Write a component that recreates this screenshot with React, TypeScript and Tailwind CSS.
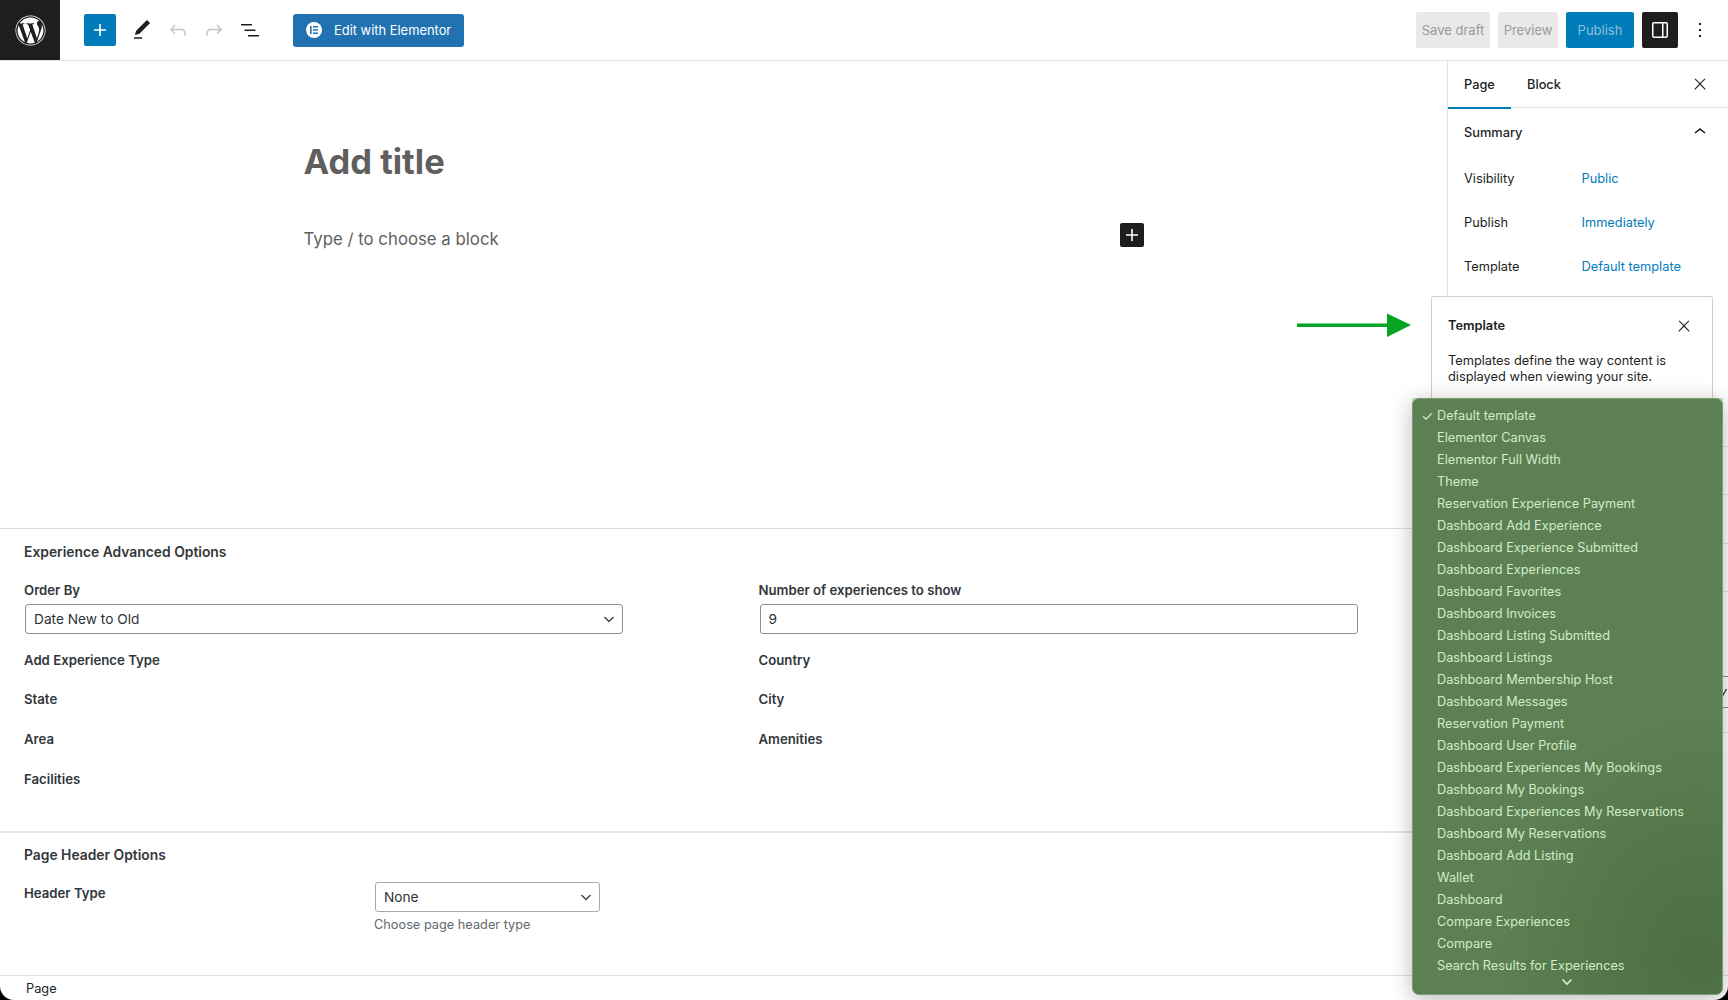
import { FaWordpress } from "react-icons/fa";

const font = { fontFamily: "Inter, 'Liberation Sans', sans-serif" };

function Ic({ d, size = 24, className = "" }: { d: string; size?: number; className?: string }) {
  return (
    <svg width={size} height={size} viewBox="0 0 24 24" fill="currentColor" className={className}>
      <path d={d} />
    </svg>
  );
}

const P = {
  plus: "M18 11.2h-5.2V6h-1.6v5.2H6v1.6h5.2V18h1.6v-5.2H18z",
  undo: "M18.3 11.7c-.6-.6-1.4-.9-2.3-.9H6.7l2.9-3.3-1.1-1-4.5 5L8.5 16l1-1-2.7-2.7H16c.5 0 .9.2 1.3.5 1 1 1 3.4 1 4.5v.3h1.5v-.2c0-1.5 0-4.3-1.5-5.7z",
  redo: "M15.6 6.5l-1.1 1 2.9 3.3H8c-.9 0-1.7.3-2.3.9-1.4 1.5-1.4 4.2-1.4 5.6v.2h1.5v-.3c0-1.1 0-3.5 1-4.5.3-.3.7-.5 1.3-.5h9.2L14.5 15l1.1 1.1 4.6-4.6-4.6-5z",
  list: "M3 6h11v1.5H3V6Zm3.5 5.5h11V13h-11v-1.5ZM21 17H10v1.5h11V17Z",
  pen: "M20.1 5.1L16.9 2 6.2 12.7l-1.3 4.4 4.5-1.3L20.1 5.1zM4 20.8h8v-1.5H4v1.5z",
  close: "M13 11.8l6.1-6.3-1-1-6.1 6.2-6.1-6.2-1 1 6.1 6.3-6.5 6.7 1 1 6.5-6.6 6.5 6.6 1-1z",
  more: "M13 19h-2v-2h2v2zm0-6h-2v-2h2v2zm0-6h-2V5h2v2z",
  drawer: "M18 4H6c-1.1 0-2 .9-2 2v12c0 1.1.9 2 2 2h12c1.1 0 2-.9 2-2V6c0-1.1-.9-2-2-2zm-4 14.5H6c-.3 0-.5-.2-.5-.5V6c0-.3.2-.5.5-.5h8v13zm4.5-.5c0 .3-.2.5-.5.5h-2.5v-13H18c.3 0 .5.2.5.5v12z",
  up: "M6.5 12.4L12 8l5.5 4.4-.9 1.2L12 10l-4.5 3.6-1-1.2z",
};

const items = [
  "Default template", "Elementor Canvas", "Elementor Full Width", "Theme", "Reservation Experience Payment",
  "Dashboard Add Experience", "Dashboard Experience Submitted", "Dashboard Experiences", "Dashboard Favorites",
  "Dashboard Invoices", "Dashboard Listing Submitted", "Dashboard Listings", "Dashboard Membership Host",
  "Dashboard Messages", "Reservation Payment", "Dashboard User Profile", "Dashboard Experiences My Bookings",
  "Dashboard My Bookings", "Dashboard Experiences My Reservations", "Dashboard My Reservations", "Dashboard Add Listing",
  "Wallet", "Dashboard", "Compare Experiences", "Compare", "Search Results for Experiences",
];

function SelectBox({ value, className }: { value: string; className: string }) {
  return (
    <div className={`flex h-[30px] items-center justify-between rounded-[3px] border border-[#8c8f94] pl-2 pr-[5px] text-[13.7px] text-[#2c3338] ${className}`}>
      <span>{value}</span>
      <svg width="16" height="16" viewBox="0 0 16 16" fill="none" stroke="#3c434a" strokeWidth="1.4"><path d="M3.5 6l4.5 4.5L12.5 6" /></svg>
    </div>
  );
}

function Label({ children, className = "" }: { children: string; className?: string }) {
  return <div className={`text-[13.2px] leading-4 font-semibold text-[#32373c] ${className}`}>{children}</div>;
}

export default function App() {
  return (
    <div className="h-[1000px] w-[1728px] overflow-hidden bg-black" style={font}>
      <div className="relative flex h-[1000px] flex-col overflow-hidden rounded-b-[14px] bg-white text-[#1e1e1e]">
        <header className="flex h-[61px] shrink-0 items-center border-b border-[#e0e0e0]">
          <div className="flex h-[60px] w-[60px] items-center justify-center self-start bg-[#1e1e1e] text-white">
            <FaWordpress size={31} />
          </div>
          <div className="ml-6 flex h-8 w-8 items-center justify-center rounded-[2px] bg-[#007cba] text-white">
            <Ic d={P.plus} />
          </div>
          <Ic d={P.pen} className="ml-[14px] text-[#1e1e1e]" />
          <Ic d={P.undo} className="ml-[12px] text-[#c4c4c4]" />
          <Ic d={P.redo} className="ml-[12px] text-[#c4c4c4]" />
          <Ic d={P.list} className="ml-[12px] text-[#1e1e1e]" />
          <div className="ml-[31px] flex h-[33px] w-[171px] items-center rounded-[3px] bg-[#2271b1] pl-[13px] text-[12.9px] text-white">
            <span className="flex h-4 w-4 items-center justify-center rounded-full bg-white">
              <svg width="8" height="8" viewBox="0 0 8 8" fill="#2271b1"><path d="M0 0h1.6v8H0zM3 0h5v1.5H3zM3 3.2h5v1.5H3zM3 6.5h5V8H3z" /></svg>
            </span>
            <span className="ml-[12px] pt-px">Edit with Elementor</span>
          </div>
          <div className="ml-auto flex items-center">
            <div className="flex h-9 w-[74px] items-center justify-center rounded-[2px] bg-[#e9e9e9] pt-px text-[13px] text-[#9a9a9a]">Save draft</div>
            <div className="ml-2 flex h-9 w-[60px] items-center justify-center rounded-[2px] bg-[#e9e9e9] pt-px text-[13px] text-[#9a9a9a]">Preview</div>
            <div className="ml-2 flex h-9 w-[68px] items-center justify-center rounded-[2px] bg-[#007cba] pt-px text-[13px] text-[#8fbfdc]">Publish</div>
            <div className="ml-2 flex h-9 w-9 items-center justify-center rounded-[2px] bg-[#1e1e1e] text-white"><Ic d={P.drawer} /></div>
            <Ic d={P.more} className="ml-[10px] mr-4 text-[#1e1e1e]" />
          </div>
        </header>

        <div className="flex min-h-0 flex-1">
          <main className="flex min-w-0 flex-1 flex-col">
            <section className="relative h-[467px] pl-[303.5px]">
              <h1 className="pt-[79px] text-[34.5px] leading-[44px] font-bold text-[#5f5f5f]">Add title</h1>
              <p className="pt-[41px] text-[16.8px] leading-7 text-[#5f5f5f]">Type / to choose a block</p>
              <div className="absolute left-[1119.5px] top-[162px] flex h-6 w-6 items-center justify-center rounded-[2px] bg-[#1e1e1e] text-white">
                <Ic d={P.plus} />
              </div>
            </section>

            <section className="h-[303px] border-t border-[#dcdcde] px-6 pt-[15px]">
              <h2 className="text-[13.85px] leading-4 font-semibold text-[#32373c]">Experience Advanced Options</h2>
              <div className="mt-[22px] flex">
                <div className="w-[734.5px]">
                  <Label>Order By</Label>
                  <SelectBox value="Date New to Old" className="ml-px mt-[6px] w-[598px]" />
                  <Label className="mt-[18px]">Add Experience Type</Label>
                  <Label className="mt-[23px]">State</Label>
                  <Label className="mt-[24px]">Area</Label>
                  <Label className="mt-[24px]">Facilities</Label>
                </div>
                <div>
                  <Label>Number of experiences to show</Label>
                  <div className="ml-px mt-[6px] flex h-[30px] w-[598px] items-center rounded-[3px] border border-[#8c8f94] pl-2 text-[13.7px] text-[#2c3338]"><span>9</span></div>
                  <Label className="mt-[18px]">Country</Label>
                  <Label className="mt-[23px]">City</Label>
                  <Label className="mt-[24px]">Amenities</Label>
                </div>
              </div>
            </section>

            <section className="flex-1 border-t-2 border-[#e5e5e5] px-6 pt-[14px]">
              <h2 className="text-[13.85px] leading-4 font-semibold text-[#32373c]">Page Header Options</h2>
              <div className="mt-[22px] flex">
                <Label className="w-[351px]">Header Type</Label>
                <div className="-mt-[3px]">
                  <SelectBox value="None" className="w-[225px] border-[#a7aaad]" />
                  <div className="-ml-px mt-[5px] text-[12.75px] leading-4 text-[#646970]">Choose page header type</div>
                </div>
              </div>
            </section>
          </main>

          <aside className="w-[281px] shrink-0 border-l border-[#e0e0e0]">
            <div className="flex h-[47px] items-center border-b border-[#e0e0e0] text-[12.8px] font-medium">
              <div className="relative flex h-[47px] w-[63px] items-center pl-4 pt-[2px]">Page<span className="absolute inset-x-0 -bottom-px h-[2px] bg-[#007cba]" /></div>
              <div className="pl-4 pt-[2px]">Block</div>
              <Ic d={P.close} size={18} className="ml-auto mr-[19px]" />
            </div>
            <div className="flex h-[48px] items-center pl-4 pr-4 pt-px text-[12.8px] font-medium">
              Summary
              <Ic d={P.up} size={24} className="ml-auto -mt-px" />
            </div>
            <div className="pt-[1px] text-[12.8px]">
              {[["Visibility", "Public"], ["Publish", "Immediately"], ["Template", "Default template"]].map(([a, b]) => (
                <div key={a} className="flex h-[44px] items-center pl-4">
                  <span className="w-[117.5px]">{a}</span>
                  <span className="text-[#007cba]">{b}</span>
                </div>
              ))}
            </div>
            <div className="mt-[110px] h-[48px] border-b border-[#e0e0e0]" />
            <div className="h-[48px] border-b border-[#e0e0e0]" />
            <div className="h-[49px] border-b border-[#e0e0e0]" />
            <div className="h-[48px] border-b border-[#e0e0e0]" />
            <div className="mt-[84px] flex h-[32px] items-center justify-end border-y border-[#8c8f94] pr-px">
              <svg width="7" height="8" viewBox="0 0 7 8" fill="none" stroke="#444" strokeWidth="1.4"><path d="M1 5l2 2 3.5-6" /></svg>
            </div>
            <div className="h-[25px] border-b border-[#e0e0e0]" />
          </aside>
        </div>

        <footer className="flex h-[25px] shrink-0 items-center border-t border-[#e0e0e0] pl-[26px] pt-[2px] text-[12.8px]">Page</footer>

        {/* annotation arrow */}
        <svg width="116" height="26" viewBox="0 0 116 26" className="absolute left-[1297px] top-[312px]" fill="#05a523">
          <rect x="0" y="11.5" width="92" height="3.5" />
          <path d="M90 1.5L114 13 90 25z" />
        </svg>

        {/* template popover */}
        <div className="absolute left-[1431px] top-[296px] h-[110px] w-[282px] rounded-[2px] border border-[#cfcfcf] bg-white pl-4 pr-4 pt-[19px]">
          <div className="flex h-5 items-center justify-between text-[12.8px] font-semibold">
            Template
            <Ic d={P.close} size={18} className="mr-[3px]" />
          </div>
          <p className="mt-[17px] text-[12.8px] leading-[15.5px]">Templates define the way content is displayed when viewing your site.</p>
        </div>

        {/* template menu */}
        <div className="absolute left-[1412px] top-[398px] h-[597px] w-[311px]">
          <div className="absolute inset-x-0 top-0 h-3 bg-[#bfe8b3]" />
          <div className="relative h-full overflow-hidden rounded-[7px] border border-[#7a9f70] bg-[#5c7f53] bg-[radial-gradient(ellipse_200px_240px_at_92%_94%,#4c6e42_0%,#54774a_50%,#5c7f53_100%)] pt-[6px] pl-[24px] text-[12.72px] leading-[22px] text-[#d0ecc8] shadow-[0_4px_22px_rgba(0,0,0,0.28)]">
            {items.map((t, i) => (
              <div key={t} className="relative h-[22px] whitespace-nowrap">
                {i === 0 && <span className="absolute -left-[16px] text-[14px]">✓</span>}
                {t}
              </div>
            ))}
            <svg width="12" height="8" viewBox="0 0 12 8" fill="none" stroke="#d8efd2" strokeWidth="1.6" className="absolute left-[148px] bottom-[8px]">
              <path d="M1.5 1.5L6 6l4.5-4.5" />
            </svg>
          </div>
        </div>
      </div>
    </div>
  );
}
